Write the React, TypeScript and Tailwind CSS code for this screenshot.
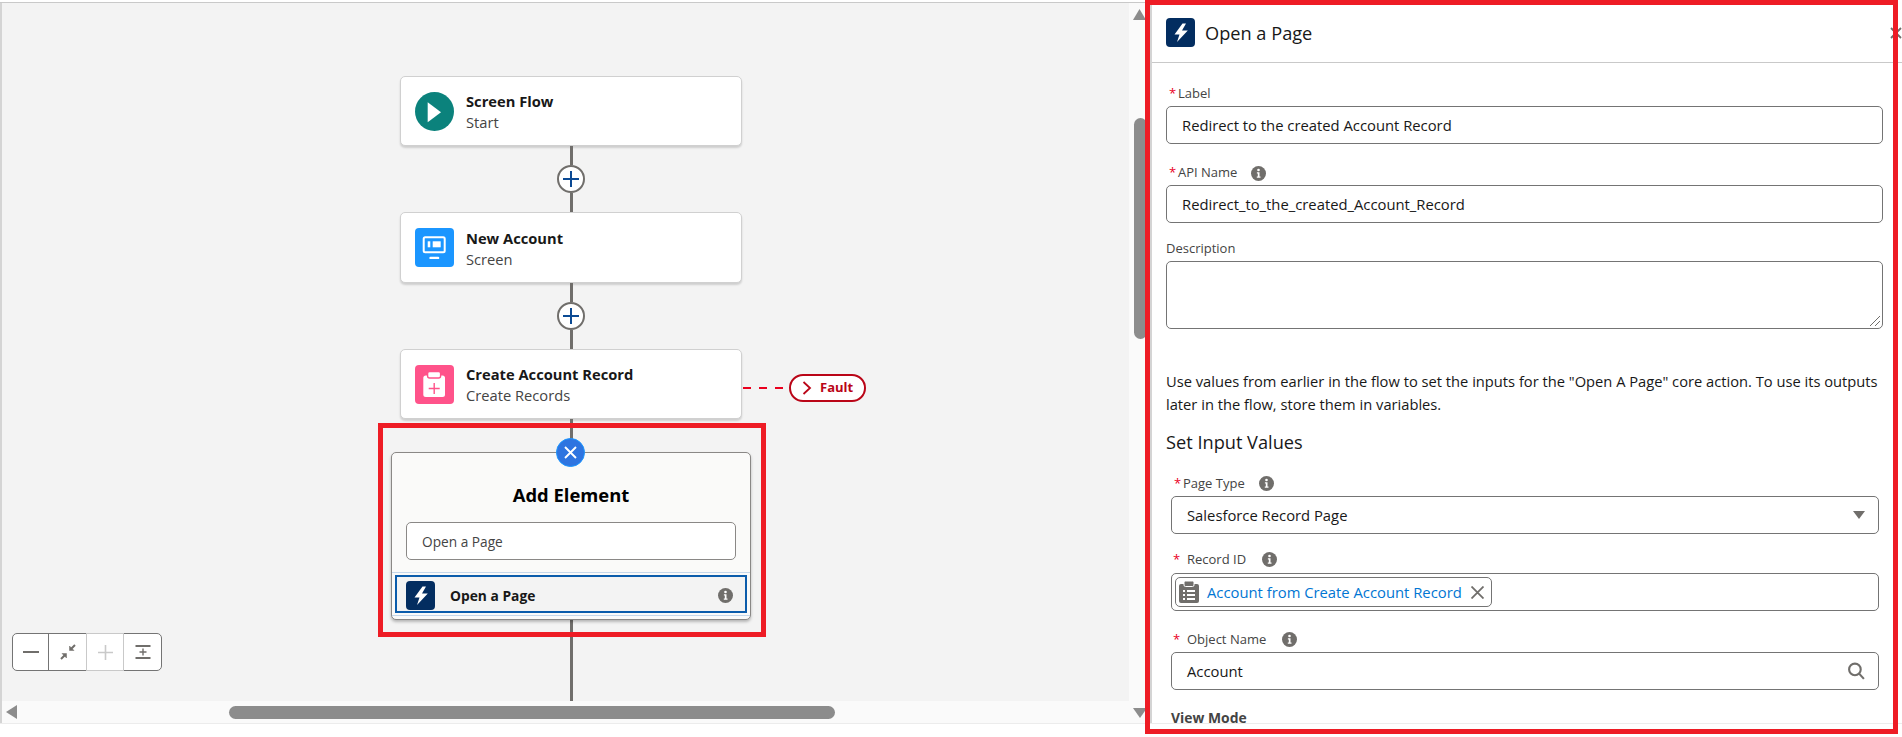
import React from "react";

const Bolt = () => (
  <div className="rounded-[4px] bg-[#032d60] shrink-0 w-[29px] h-[29px]">
    <svg width="29" height="29" viewBox="0 0 29 29" fill="#ffffff">
      <path d="M16.500 5.500 8.500 16.400h5L11 24 21.800 12.400h-5.800L20 5.500z" />
    </svg>
  </div>
);

const Info = () => (
  <svg width="15" height="15" viewBox="0 0 15 15" className="shrink-0">
    <circle cx="7.5" cy="7.5" r="7.5" fill="#706e6b" />
    <circle cx="7.5" cy="4" r="1.3" fill="#fff" />
    <path d="M5.9 6.2h2.600v4.300h1v1.200H5.800v-1.200h1V7.400h-.9z" fill="#fff" />
  </svg>
);

const Plus = () => (
  <div className="flex items-center justify-center w-[28px] h-[28px] rounded-full bg-white border-[2px] border-[#706e6b] shrink-0">
    <svg width="16" height="16" viewBox="0 0 16 16" stroke="#0b4a94" strokeWidth="2">
      <path d="M8 0v16M0 8h16" />
    </svg>
  </div>
);

const Connector = () => (
  <div className="h-[66px] flex flex-col items-center">
    <div className="w-[3px] flex-1 bg-[#706e6b]" />
    <Plus />
    <div className="w-[3px] flex-1 bg-[#706e6b]" />
  </div>
);

const Card = ({ icon, title, sub, tall }: { icon: React.ReactNode; title: string; sub: string; tall?: boolean }) => (
  <div
    className={`w-[342px] ${tall ? "h-[71px]" : "h-[70px]"} shrink-0 bg-white rounded-[5px] border border-[#d0d0d0] shadow-[0_2px_2px_rgba(0,0,0,0.15)] flex items-center pl-[14px]`}
  >
    {icon}
    <div className="ml-[12px] pt-[2px] flex flex-col">
      <div className="text-[14.7px] leading-[21px] font-bold text-[#181818]">{title}</div>
      <div className="text-[14.7px] leading-[21px] text-[#444444]">{sub}</div>
    </div>
  </div>
);

const Label = ({
  star,
  spaced,
  children,
  info,
  down,
  up,
}: {
  star?: boolean;
  spaced?: boolean;
  children: string;
  info?: boolean;
  down?: boolean;
  up?: boolean;
}) => (
  <div
    className={`h-[20px] mb-[3px] flex items-center text-[13px] text-[#444444] ${down ? "pt-[2px]" : ""} ${up ? "pb-[2px]" : ""}`}
  >
    {star && <span className={spaced ? "text-[#ea001e] w-[13px] pl-[2px]" : "text-[#ea001e] w-[12px] pl-[3px]"}>*</span>}
    <span className={star && spaced ? "ml-[3px]" : ""}>{children}</span>
    {info && (
      <span className={spaced ? "ml-[16px]" : "ml-[14px]"}>
        <Info />
      </span>
    )}
  </div>
);

const boxClass =
  "h-[38px] rounded-[5px] border border-[#747474] bg-white flex items-center text-[14.8px] text-[#181818]";

export default function App() {
  return (
    <div className="relative w-[1902px] h-[737px] overflow-hidden bg-white font-['Open_Sans',sans-serif]">
      <div className="flex h-[723px] pt-0">
        {/* left area */}
        <div className="w-[1150px] shrink-0 flex flex-col">
          <div className="h-[2px] shrink-0 bg-white" />
          <div className="flex-1 min-h-0 flex border-t border-[#c9c9c9]">
            <div className="w-[1129px] shrink-0 flex flex-col border-l-2 border-[#d4d4d4]">
              {/* canvas */}
              <div className="relative flex-1 min-h-0 overflow-hidden bg-[#f3f3f3]">
                <div className="flex flex-col w-[342px] h-full ml-[398px] pt-[73px]">
                  <Card
                    title="Screen Flow"
                    sub="Start"
                    icon={
                      <svg width="39" height="39" viewBox="0 0 39 39" className="shrink-0">
                        <circle cx="19.5" cy="19.5" r="19.5" fill="#0b827c" />
                        <path d="M12.700 10.300 26 20.300 12.700 30.300z" fill="#fff" />
                      </svg>
                    }
                  />
                  <Connector />
                  <Card
                    tall
                    title="New Account"
                    sub="Screen"
                    icon={
                      <svg width="39" height="39" viewBox="0 0 39 39" className="shrink-0">
                        <rect width="39" height="39" rx="4" fill="#1b96ff" />
                        <rect x="8.700" y="9.300" width="21" height="15" rx="1.500" fill="none" stroke="#fff" strokeWidth="2" />
                        <rect x="12.700" y="13.300" width="2.600" height="6" fill="#fff" />
                        <rect x="17.700" y="13.300" width="8" height="6" fill="#fff" />
                        <rect x="14.300" y="28.700" width="10" height="2.400" rx="1.200" fill="#fff" />
                      </svg>
                    }
                  />
                  <Connector />
                  <div className="flex items-center w-max">
                    <Card
                      title="Create Account Record"
                      sub="Create Records"
                      icon={
                        <svg width="39" height="39" viewBox="0 0 39 39" className="shrink-0">
                          <rect width="39" height="39" rx="4" fill="#ff538a" />
                          <rect x="8.300" y="10.500" width="21.700" height="21.500" rx="2.500" fill="#fff" />
                          <rect x="12.600" y="6.500" width="13" height="6.500" rx="2" fill="#fff" stroke="#ff538a" strokeWidth="1.400" />
                          <path d="M19.200 18v11M13.700 23.500h11" stroke="#ff538a" strokeWidth="1.400" />
                        </svg>
                      }
                    />
                    <div className="flex gap-[8px] ml-[1px] mt-[8px]">
                      <div className="w-[8px] h-[2px] bg-[#ea001e]" />
                      <div className="w-[8px] h-[2px] bg-[#ea001e]" />
                      <div className="w-[8px] h-[2px] bg-[#ea001e]" />
                    </div>
                    <div className="ml-[6px] mt-[8px] w-[77px] h-[28px] rounded-full border-[2px] border-[#ba0517] bg-white flex items-center pl-[11px] text-[13px] font-bold text-[#ba0517]">
                      <svg width="10" height="14" viewBox="0 0 10 14" fill="none" stroke="#ba0517" strokeWidth="1.800" className="shrink-0">
                        <path d="M1.500 1 8 7l-6.500 6" />
                      </svg>
                      <span className="ml-[8px]">Fault</span>
                    </div>
                  </div>
                  <div className="w-[3px] h-[33px] shrink-0 bg-[#706e6b] self-center" />
                  {/* add element panel */}
                  <div className="relative w-[360px] h-[168px] shrink-0 -ml-[9px] rounded-[5px] bg-[#fafaf9] border border-[#8a8886] shadow-[0_2px_3px_rgba(0,0,0,0.25)] flex flex-col items-center">
                    <div className="absolute -top-[15px] left-[164px] w-[29px] h-[29px] rounded-full bg-[#2e74e0] border border-[#1b96ff] flex items-center justify-center">
                      <svg width="13" height="13" viewBox="0 0 13 13" stroke="#fff" strokeWidth="1.900">
                        <path d="M1 1l11 11M12 1 1 12" />
                      </svg>
                    </div>
                    <div className="mt-[28px] h-[28px] leading-[28px] text-[18.4px] font-bold text-black">Add Element</div>
                    <div className="mt-[13px] w-[330px] h-[38px] rounded-[5px] border border-[#8a8886] bg-white flex items-center pl-[15px] pt-[2px] text-[13.7px] text-[#444444]">
                      Open a Page
                    </div>
                    <div className="mt-[12px] w-full border-t border-[#c5d7ea] pt-[2px] pb-[2px] border-b px-[3px]">
                      <div className="h-[38px] border-2 border-[#0b5cab] bg-[#f3f3f3] flex items-center pl-[9px] pr-[12px] pt-[3px]">
                        <Bolt />
                        <span className="ml-[15px] mt-[2px] text-[13.8px] font-bold text-[#181818]">Open a Page</span>
                        <span className="ml-auto">
                          <Info />
                        </span>
                      </div>
                    </div>
                  </div>
                  <div className="w-[3px] flex-1 bg-[#706e6b] self-center" />
                </div>
                {/* zoom controls */}
                <div className="absolute left-[10px] bottom-[30px] w-[150px] h-[38px] flex rounded-[5px] bg-white border border-[#747474]">
                  <div className="w-[36px] flex items-center justify-center border-r border-[#747474]">
                    <svg width="16" height="2" viewBox="0 0 16 2"><rect width="16" height="2" fill="#706e6b" /></svg>
                  </div>
                  <div className="w-[37px] flex items-center justify-center">
                    <svg width="16" height="16" viewBox="0 0 16 16" fill="#706e6b" stroke="#706e6b">
                      <path d="M9.500 2v4.500H14z" strokeWidth="0.500" />
                      <path d="M6.500 14V9.500H2z" strokeWidth="0.500" />
                      <path d="M15 1l-4 4M1 15l4-4" strokeWidth="2" fill="none" />
                    </svg>
                  </div>
                  <div className="w-[38px] flex items-center justify-center border-x border-y border-[#c9c9c9] -my-px bg-white">
                    <svg width="15" height="15" viewBox="0 0 15 15" stroke="#c9c9c9" strokeWidth="1.600">
                      <path d="M7.500 0v15M0 7.500h15" />
                    </svg>
                  </div>
                  <div className="flex-1 flex items-center justify-center">
                    <svg width="16" height="14" viewBox="0 0 16 14" fill="#706e6b">
                      <rect width="15" height="2" x="0.500" />
                      <rect width="15" height="2" x="0.500" y="12" />
                      <path d="M7.300 3.500h1.400v2.800h2.800v1.400H8.700v2.800H7.300V7.700H4.500V6.300h2.800z" />
                    </svg>
                  </div>
                </div>
              </div>
              {/* horizontal scrollbar */}
              <div className="h-[22px] shrink-0 bg-[#fafafa] flex items-center pl-[4px]">
                <svg width="11" height="14" viewBox="0 0 11 14" fill="#8c8c8c" className="shrink-0">
                  <path d="M11 0v14L0 7z" />
                </svg>
                <div className="ml-[212px] w-[606px] h-[13px] rounded-full bg-[#8c8c8c]" />
              </div>
            </div>
            {/* vertical scrollbar */}
            <div className="w-[21px] shrink-0 bg-[#fafafa] flex flex-col items-start pl-[4px] pt-[6px] pb-[5px]">
              <svg width="13" height="11" viewBox="0 0 13 11" fill="#8c8c8c" className="shrink-0">
                <path d="M0 11h13L6.500 0z" />
              </svg>
              <div className="mt-[98px] ml-[1px] w-[13px] h-[221px] rounded-full bg-[#8c8c8c]" />
              <svg width="14" height="10" viewBox="0 0 14 10" fill="#8c8c8c" className="shrink-0 mt-auto">
                <path d="M0 0h14L7 10z" />
              </svg>
            </div>
          </div>
        </div>

        {/* right panel */}
        <div className="flex-1 min-w-0 overflow-hidden border-l-2 border-[#d4d4d4] bg-white flex flex-col">
          <div className="h-[63px] shrink-0 pt-[3px] border-b border-[#c9c9c9] flex items-center pl-[14px]">
            <Bolt />
            <span className="ml-[10px] mt-[3px] text-[18.2px] text-[#181818]">Open a Page</span>
            <svg width="12" height="12" viewBox="0 0 12 12" stroke="#706e6b" strokeWidth="1.800" className="ml-auto">
              <path d="M1 1l10 10M11 1 1 11" />
            </svg>
          </div>
          <div className="pl-[14px] w-[731px]">
            <div className="mt-[20px]">
              <Label star down>Label</Label>
              <div className={`${boxClass} pl-[15px] pt-[1px]`}>Redirect to the created Account Record</div>
            </div>
            <div className="mt-[18px]">
              <Label star info down>API Name</Label>
              <div className={`${boxClass} pl-[15px] pt-[1px]`}>Redirect_to_the_created_Account_Record</div>
            </div>
            <div className="mt-[15px]">
              <Label down>Description</Label>
              <div className="relative h-[68px] rounded-[5px] border border-[#747474] bg-white">
                <svg width="12" height="12" viewBox="0 0 12 12" stroke="#706e6b" strokeWidth="1" className="absolute right-[1px] bottom-[1px]">
                  <path d="M1 11 11 1M6 11l5-5" />
                </svg>
              </div>
            </div>
            <p className="mt-[41px] text-[14.7px] leading-[22.7px] text-[#181818]">
              Use values from earlier in the flow to set the inputs for the "Open A Page" core action. To use its outputs later in the flow, store them in variables.
            </p>
            <div className="mt-[15px] h-[24px] leading-[24px] text-[18.2px] text-[#181818]">Set Input Values</div>
            <div className="ml-[5px] w-[708px]">
              <div className="mt-[19px]">
                <Label star info>Page Type</Label>
                <div className={`${boxClass} pl-[15px] pr-[13px] justify-between`}>
                  <span>Salesforce Record Page</span>
                  <svg width="12" height="8" viewBox="0 0 12 8" fill="#706e6b"><path d="M0 0h12L6 8z" /></svg>
                </div>
              </div>
              <div className="mt-[16px]">
                <Label star spaced info up>Record ID</Label>
                <div className={`${boxClass} pl-[3px]`}>
                  <div className="w-[317px] h-[30px] rounded-[5px] border border-[#747474] flex items-center pl-[3px]">
                    <svg width="20" height="22" viewBox="0 0 20 22" className="shrink-0">
                      <path d="M2 3h16a2 2 0 0 1 2 2v15a2 2 0 0 1-2 2H2a2 2 0 0 1-2-2V5a2 2 0 0 1 2-2z" fill="#706e6b" />
                      <rect x="5" y="0" width="10" height="5.500" rx="1.500" fill="#706e6b" stroke="#fff" strokeWidth="1" />
                      <path d="M4 9h2v2H4zM8 9h8v2H8zM4 13h2v2H4zM8 13h8v2H8zM4 17h2v2H4zM8 17h8v2H8z" fill="#fff" />
                    </svg>
                    <span className="ml-[8px] text-[#0176d3]">Account from Create Account Record</span>
                    <svg width="13" height="13" viewBox="0 0 13 13" stroke="#706e6b" strokeWidth="1.800" className="ml-auto mr-[7px] shrink-0">
                      <path d="M.5.500l12 12M12.500.500l-12 12" />
                    </svg>
                  </div>
                </div>
              </div>
              <div className="mt-[18px]">
                <Label star spaced info>Object Name</Label>
                <div className={`${boxClass} pl-[15px] pr-[12px] justify-between`}>
                  <span>Account</span>
                  <svg width="19" height="18" viewBox="0 0 18 17" fill="none" stroke="#706e6b" strokeWidth="2">
                    <circle cx="7.500" cy="7" r="5.500" />
                    <path d="m11.500 11 4.500 5" />
                  </svg>
                </div>
              </div>
              <div className="mt-[18px] h-[20px] leading-[20px] text-[13.9px] font-bold text-[#444444]">View Mode</div>
            </div>
          </div>
        </div>
      </div>
      <div className="h-px bg-[#ececec]" />

      {/* annotation rectangles */}
      <div className="absolute left-[378px] top-[423px] w-[388px] h-[214px] border-[5px] border-[#ee1c25] pointer-events-none" />
      <div className="absolute left-[1145px] top-0 w-[753px] h-[734px] border-[5px] border-[#ee1c25] pointer-events-none" />
    </div>
  );
}
